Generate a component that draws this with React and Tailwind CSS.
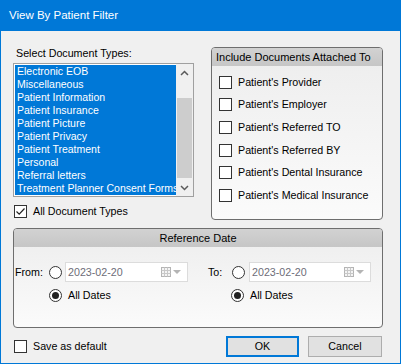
import React from 'react';

const docTypes = [
    'Electronic EOB',
    'Miscellaneous',
    'Patient Information',
    'Patient Insurance',
    'Patient Picture',
    'Patient Privacy',
    'Patient Treatment',
    'Personal',
    'Referral letters',
    'Treatment Planner Consent Forms',
];

const attachedTo = [
    "Patient's Provider",
    "Patient's Employer",
    "Patient's Referred TO",
    "Patient's Referred BY",
    "Patient's Dental Insurance",
    "Patient's Medical Insurance",
];

const CheckBox = ({ checked }) => (
    <span className="w-[13px] h-[13px] shrink-0 border border-[#333] bg-white flex items-center justify-center">
        {checked && (
            <svg width="11" height="11" viewBox="0 0 11 11">
                <path d="M1.5 5.5 L4.2 8.2 L9.5 2.5" fill="none" stroke="#222" strokeWidth="1.2" />
            </svg>
        )}
    </span>
);

const Radio = ({ checked }) => (
    <span className="w-[13px] h-[13px] shrink-0 rounded-full border border-[#333] bg-white flex items-center justify-center">
        {checked && <span className="w-[7px] h-[7px] rounded-full bg-[#222]" />}
    </span>
);

const Chevron = ({ down }) => (
    <svg width="9" height="6" viewBox="0 0 9 6">
        <path d={down ? 'M1 1 L4.5 4.5 L8 1' : 'M1 5 L4.5 1.5 L8 5'} fill="none" stroke="#5a5a5a" strokeWidth="1.5" />
    </svg>
);

const DateBox = ({ w }) => (
    <div className={`${w} h-[20px] border border-[#dcdcdc] bg-white flex items-center pl-[2px] pr-[6px]`}>
        <span className="flex-1 text-[#6d6d78]">2023-02-20</span>
        <svg width="10" height="10" viewBox="0 0 10 10" className="mr-[2px]">
            <rect x="0.5" y="0.5" width="9" height="9" fill="#f4f4f4" stroke="#b4b4b4" />
            <path d="M0.5 3.5 H9.5 M0.5 6.5 H9.5 M3.5 0.5 V9.5 M6.5 0.5 V9.5" stroke="#c8c8c8" />
        </svg>
        <svg width="8" height="4" viewBox="0 0 8 4">
            <path d="M0 0 H8 L4 4 Z" fill="#b4b4b4" />
        </svg>
    </div>
);

export default function App() {
    return (
        <div className="w-[401px] h-[364px] flex flex-col border-x border-b border-[#0078d7] font-['Liberation_Sans',Arial,sans-serif] text-[10.7px] text-black leading-[13px]">
            {/* Title bar */}
            <div className="h-[31px] shrink-0 bg-[#0078d7] flex items-center pl-[8px] -mx-px">
                <span className="text-white text-[11.5px] pl-px">View By Patient Filter</span>
            </div>

            <div className="flex-1 bg-[#f0f0f0] pt-[16px] pl-[12px] pr-[17px] pb-[6px] flex flex-col">
                {/* Top row */}
                <div className="flex h-[173px] justify-between">
                    <div className="w-[181px] flex flex-col">
                        <div className="h-[13px] pl-[3px]">Select Document Types:</div>
                        <div className="mt-[3px] h-[134px] border border-[#a0a0a0] bg-white flex">
                            <div className="flex-1 pt-px pl-px overflow-hidden">
                                {docTypes.map((t) => (
                                    <div key={t} className="h-[13px] bg-[#0078d7] text-white whitespace-nowrap pl-[2px] text-[10.5px]">{t}</div>
                                ))}
                            </div>
                            <div className="w-[17px] bg-[#f0f0f0] flex flex-col">
                                <div className="h-[17px] flex items-center justify-center"><Chevron /></div>
                                <div className="flex-1 px-px pt-[17px]">
                                    <div className="h-[80px] bg-[#cdcdcd]" />
                                </div>
                                <div className="h-[17px] flex items-center justify-center"><Chevron down /></div>
                            </div>
                        </div>
                        <div className="mt-[8px] flex items-center gap-[6px] pl-px">
                            <CheckBox checked />
                            <span>All Document Types</span>
                        </div>
                    </div>

                    <div className="w-[172px] rounded-[4px] border border-[#6e6e6e] overflow-hidden flex flex-col bg-linear-to-b from-[#ededed] to-[#fbfbfb]">
                        <div className="h-[18px] bg-linear-to-b from-[#d2d2d2] to-[#c6c6c6] flex items-center pl-[4px] text-[11px]">Include Documents Attached To</div>
                        <div className="pt-[5px] pl-[7px] flex flex-col">
                            {attachedTo.map((a) => (
                                <div key={a} className="h-[22.6px] flex items-center gap-[6px]">
                                    <CheckBox />
                                    <span>{a}</span>
                                </div>
                            ))}
                        </div>
                    </div>
                </div>

                {/* Reference Date */}
                <div className="mt-[8px] h-[100px] rounded-[4px] border border-[#6e6e6e] overflow-hidden flex flex-col bg-linear-to-b from-[#ededed] to-[#fbfbfb]">
                    <div className="h-[18px] bg-linear-to-b from-[#d2d2d2] to-[#c6c6c6] flex items-center justify-center text-[11px]">Reference Date</div>
                    <div className="pt-[15px] pl-px flex flex-col">
                        <div className="flex items-center">
                            <span className="w-[34px]">From:</span>
                            <Radio />
                            <div className="ml-[3px]"><DateBox w="w-[123px]" /></div>
                            <span className="ml-[20px] w-[24px]">To:</span>
                            <Radio />
                            <div className="ml-[4px]"><DateBox w="w-[122px]" /></div>
                        </div>
                        <div className="mt-[7px] flex items-center">
                            <div className="w-[216px] pl-[34px] flex items-center gap-[6px]">
                                <Radio checked />
                                <span>All Dates</span>
                            </div>
                            <div className="flex items-center gap-[6px]">
                                <Radio checked />
                                <span>All Dates</span>
                            </div>
                        </div>
                    </div>
                </div>

                {/* Bottom row */}
                <div className="mt-[8px] h-[21px] flex items-center justify-between">
                    <div className="flex items-center gap-[6px] pl-px">
                        <CheckBox />
                        <span>Save as default</span>
                    </div>
                    <div className="flex gap-[9px] pr-px">
                        <button className="w-[73px] h-[21px] bg-[#e1e1e1] border-2 border-[#0078d7] leading-[13px]">OK</button>
                        <button className="w-[74px] h-[21px] bg-[#e1e1e1] border border-[#adadad] leading-[13px]">Cancel</button>
                    </div>
                </div>
            </div>
        </div>
    );
}
